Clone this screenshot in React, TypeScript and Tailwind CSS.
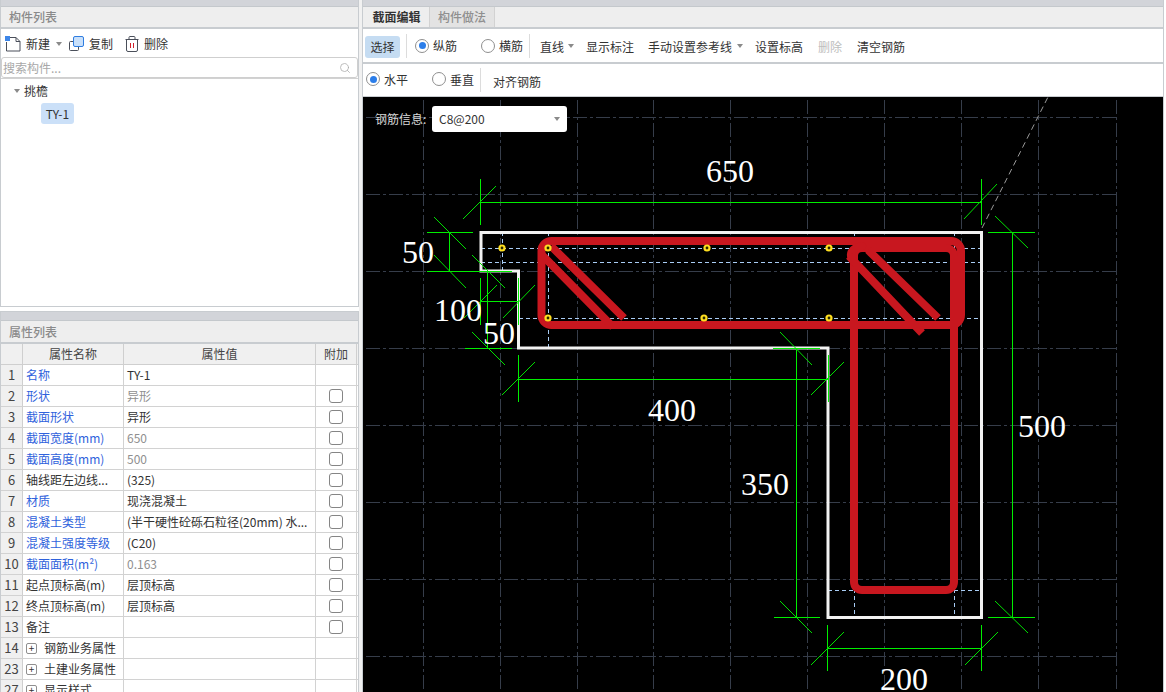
import { Search } from "lucide-react";

const BLUE = "text-[#2f62dc]";
const GRAY = "text-[#8f8f8f]";
const DARK = "text-[#333333]";

type Row = {
  no: number;
  name: string;
  value?: string;
  nameBlue?: boolean;
  valueGray?: boolean;
  check?: boolean;
  group?: boolean;
};

const rows: Row[] = [
  { no: 1, name: "名称", value: "TY-1", nameBlue: true },
  { no: 2, name: "形状", value: "异形", nameBlue: true, valueGray: true, check: true },
  { no: 3, name: "截面形状", value: "异形", nameBlue: true, check: true },
  { no: 4, name: "截面宽度(mm)", value: "650", nameBlue: true, valueGray: true, check: true },
  { no: 5, name: "截面高度(mm)", value: "500", nameBlue: true, valueGray: true, check: true },
  { no: 6, name: "轴线距左边线...", value: "(325)", check: true },
  { no: 7, name: "材质", value: "现浇混凝土", nameBlue: true, check: true },
  { no: 8, name: "混凝土类型", value: "(半干硬性砼砾石粒径(20mm) 水...", nameBlue: true, check: true },
  { no: 9, name: "混凝土强度等级", value: "(C20)", nameBlue: true, check: true },
  { no: 10, name: "截面面积(m²)", value: "0.163", nameBlue: true, valueGray: true, check: true },
  { no: 11, name: "起点顶标高(m)", value: "层顶标高", check: true },
  { no: 12, name: "终点顶标高(m)", value: "层顶标高", check: true },
  { no: 13, name: "备注", check: true },
  { no: 14, name: "钢筋业务属性", group: true },
  { no: 23, name: "土建业务属性", group: true },
  { no: 27, name: "显示样式", group: true },
];

const Caret = ({ className = "" }: { className?: string }) => (
  <span className={`inline-block w-0 h-0 border-x-[3px] border-x-transparent border-t-[4px] border-t-[#8a8a8a] ${className}`} />
);

const Radio = ({ on, label, className = "" }: { on?: boolean; label: string; className?: string }) => (
  <div className={`flex items-center ${className}`}>
    <span className="w-[14px] h-[14px] rounded-full border border-[#8f8f8f] flex items-center justify-center">
      {on && <span className="w-[7px] h-[7px] rounded-full bg-[#2b7de9]" />}
    </span>
    <span className={`ml-[4px] mt-[1px] ${DARK}`}>{label}</span>
  </div>
);

const NewIcon = () => (
  <svg width="16" height="16" viewBox="0 0 16 16" className="shrink-0">
    <path d="M5 1.5H11L15 5.5V15H1.5V6" fill="none" stroke="#4a4f5a" />
    <path d="M11 1.5V5.5H15" fill="none" stroke="#4a4f5a" />
    <rect x="0" y="0" width="5" height="5" fill="#3d86e8" />
  </svg>
);

const CopyIcon = () => (
  <svg width="15" height="16" viewBox="0 0 15 16" className="shrink-0">
    <rect x="0.5" y="5.5" width="9" height="9" rx="1" fill="none" stroke="#4a4f5a" />
    <rect x="4.5" y="0.5" width="10" height="10" rx="1.5" fill="#c9e0fa" stroke="#2f7de0" />
  </svg>
);

const TrashIcon = () => (
  <svg width="14" height="16" viewBox="0 0 14 16" className="shrink-0">
    <path d="M0.5 3.5H13.5M4 3.5V1.5Q4 0.5 5 0.5H9Q10 0.5 10 1.5V3.5" fill="none" stroke="#4a4f5a" />
    <path d="M1.5 3.5V14Q1.5 15.5 3 15.5H11Q12.5 15.5 12.5 14V3.5" fill="none" stroke="#4a4f5a" />
    <path d="M5.5 7V12M8.5 7V12" fill="none" stroke="#d0202a" />
  </svg>
);

const PropertyRow = ({ row }: { row: Row }) => (
  <div className="flex h-[21px] shrink-0 border-b border-[#d2d2d2] text-[12px]">
    <div className="w-[22px] bg-[#f0f0f0] border-r border-[#cfcfcf] flex items-center justify-center text-[13px] text-[#444444]">
      {row.no}
    </div>
    <div className={`w-[101px] border-r border-[#d2d2d2] flex items-center pl-[3px] whitespace-nowrap ${row.nameBlue ? BLUE : DARK}`}>
      {row.group ? (
        <>
          <span className="w-[11px] h-[11px] rounded-[2px] border border-[#8f8f8f] flex items-center justify-center text-[10px] leading-none mr-[7px]">
            +
          </span>
          {row.name}
        </>
      ) : (
        row.name
      )}
    </div>
    <div className={`w-[192px] border-r border-[#d2d2d2] flex items-center pl-[3px] whitespace-nowrap overflow-hidden ${row.valueGray ? GRAY : DARK}`}>
      {row.value}
    </div>
    <div className="w-[41px] border-r border-[#d2d2d2] flex items-center justify-center">
      {row.check && <span className="w-[14px] h-[14px] rounded-[3px] border border-[#858585] bg-white" />}
    </div>
  </div>
);

const Line = ({ d }: { d: string }) => <path d={d} fill="none" stroke="#00ee00" strokeWidth="1" shapeRendering="crispEdges" />;

// each diagonal tick is drawn apart because it is antialiased in the picture
const Slash = ({ x1, y1, x2, y2 }: { x1: number; y1: number; x2: number; y2: number }) => (
  <line x1={x1} y1={y1} x2={x2} y2={y2} stroke="#00e000" strokeWidth="1" />
);

const gridX = [423, 500, 577, 653, 730, 807, 884, 961, 1038, 1116];
const gridY = [117, 194, 271, 348, 425, 502, 579, 656];

const dims: [string, number, number][] = [
  ["650", 706, 182],
  ["50", 402, 263],
  ["100", 434, 321],
  ["50", 483, 344],
  ["400", 648, 421],
  ["350", 741, 495],
  ["500", 1018, 437],
  ["200", 880, 690],
];

const dots: [number, number][] = [
  [502, 248],
  [548, 248],
  [548, 318],
  [707, 248],
  [829, 248],
  [704, 318],
  [829, 318],
];

const Drawing = () => (
  <svg viewBox="363 97 800 595" className="absolute inset-0 w-[800px] h-[595px]">
    <g stroke="#363d4a" strokeWidth="1" strokeDasharray="14 3 3 3" shapeRendering="crispEdges">
      {gridX.map((x) => (
        <line key={x} x1={x} y1={100} x2={x} y2={692} />
      ))}
      {gridY.map((y) => (
        <line key={y} x1={366} y1={y} x2={1116} y2={y} />
      ))}
    </g>

    <path d="M982 228L1048 97" stroke="#9a9a9a" strokeWidth="1" strokeDasharray="6 4" fill="none" />

    <g stroke="#a9cdf5" strokeWidth="1" strokeDasharray="4 3" shapeRendering="crispEdges" fill="none">
      <path d="M481 248H982M481 262H982M519 318H982M828 590H982" />
      <path d="M502 232V271M548 232V348M854 232V617M954 232V617" />
    </g>

    <path d="M481 232.5H981.5V617.5H828V348H518.5V271H481Z" fill="none" stroke="#f2f2f2" strokeWidth="3" />

    <Line d="M480.5 202H981.5M480.5 179V225M981.5 179V225" />
    <Slash x1={463} y1={219} x2={496} y2={186} />
    <Slash x1={964} y1={219} x2={997} y2={184} />
    <Line d="M1012 232V617M988 232H1035M988 617H1035" />
    <Slash x1={995} y1={216} x2={1028} y2={248} />
    <Slash x1={995} y1={601} x2={1028} y2={633} />
    <Line d="M828 648H981.5M827.5 625V671M981.5 625V671" />
    <Slash x1={811} y1={665} x2={844} y2={632} />
    <Slash x1={965} y1={665} x2={998} y2={632} />
    <Line d="M449 232V271M427 232H473M427 271H512" />
    <Slash x1={434} y1={217} x2={466} y2={249} />
    <Slash x1={434} y1={255} x2={466} y2={288} />
    <Line d="M480 301H518M480.5 278V325M518.5 278V325" />
    <Slash x1={464} y1={318} x2={497} y2={285} />
    <Slash x1={503} y1={318} x2={535} y2={285} />
    <Line d="M487.5 271V348M465 348H512" />
    <Slash x1={472} y1={255} x2={505} y2={288} />
    <Slash x1={472} y1={332} x2={505} y2={365} />
    <Line d="M518 379H828M518.5 355V402M828 355V402" />
    <Slash x1={502} y1={395} x2={535} y2={362} />
    <Slash x1={811} y1={395} x2={844} y2={362} />
    <Line d="M796.5 348V617M773 348H820M774 617H820" />
    <Slash x1={780} y1={332} x2={812} y2={365} />
    <Slash x1={780} y1={601} x2={812} y2={633} />

    <g fill="none" stroke="#c8171f" strokeWidth="8">
      <rect x="541.5" y="241" width="419.5" height="84" rx="10" />
      <rect x="854" y="248" width="100" height="342" rx="8" />
      <path d="M551 246L624 318M542 255L613 327" />
      <path d="M854 262Q845 250 862 246" strokeLinecap="round" />
      <path d="M868 250L938 318M849 256L922 333" />
    </g>

    {dots.map(([x, y]) => (
      <circle key={`${x}-${y}`} cx={x} cy={y} r="2.5" fill="#2a2a00" stroke="#ffdf20" strokeWidth="2.2" />
    ))}

    <g className="font-['Liberation_Serif',serif]" fill="#ffffff" fontSize="32">
      {dims.map(([t, x, y]) => (
        <text key={`${t}-${x}`} x={x} y={y}>
          {t}
        </text>
      ))}
    </g>
  </svg>
);

export default function App() {
  return (
    <div className="w-[1166px] h-[692px] overflow-hidden flex bg-white text-[12px] font-['Noto_Sans_CJK_SC','Noto_Sans',sans-serif]">
      {/* left column */}
      <div className="w-[362px] shrink-0 flex flex-col border-r-[3px] border-[#f1f1f1]">
        <div className="h-[307px] shrink-0 flex flex-col border-x border-b border-[#c8ccd0]">
          <div className="h-[7px] shrink-0 bg-[#d2d4d9] border-b border-[#c4c8cc]" />
          <div className="h-[22px] shrink-0 bg-[#eeeeee] border-b-2 border-[#c8ccd0] flex items-center pl-[8px] text-[#8a8a8a] font-medium">
            构件列表
          </div>
          <div className="h-[27px] shrink-0 flex items-center pl-[4px] pt-[2px] text-[#333333]">
            <NewIcon />
            <span className="ml-[5px]">新建</span>
            <Caret className="ml-[6px]" />
            <span className="ml-[7px]"><CopyIcon /></span>
            <span className="ml-[5px]">复制</span>
            <span className="ml-[12px]"><TrashIcon /></span>
            <span className="ml-[5px]">删除</span>
          </div>
          <div className="h-[21px] shrink-0 mt-[1px] rounded-[3px] border border-[#cfcfcf] flex items-center justify-between pl-[1px] pr-[6px] text-[#a8a8a8]">
            <span>搜索构件...</span>
            <Search size={12} strokeWidth={1.5} className="text-[#a8a8a8]" />
          </div>
          <div className="flex-1 border-t border-[#d2d2d2] pt-[1px] text-[#333333]">
            <div className="h-[21px] flex items-center pl-[13px]">
              <Caret className="mr-[4px]" />
              <span>挑檐</span>
            </div>
            <div className="mt-[2px] ml-[40px] w-[33px] h-[21px] rounded-[3px] bg-[#cbe0f8] flex items-center justify-center">
              TY-1
            </div>
          </div>
        </div>

        <div className="mt-[4px] flex-1 min-h-0 overflow-hidden flex flex-col border-x border-t border-[#c8ccd0]">
          <div className="h-[9px] shrink-0 bg-[#d2d4d9] border-b border-[#c4c8cc]" />
          <div className="h-[23px] shrink-0 bg-[#eeeeee] border-b-2 border-[#c8ccd0] flex items-center pl-[8px] text-[#8a8a8a] font-medium">
            属性列表
          </div>
          <div className="flex h-[21px] shrink-0 bg-[#f0f0f0] border-b border-[#cfcfcf] text-[#444444]">
            <div className="w-[22px] border-r border-[#cfcfcf]" />
            <div className="w-[101px] border-r border-[#cfcfcf] flex items-center justify-center">属性名称</div>
            <div className="w-[192px] border-r border-[#cfcfcf] flex items-center justify-center">属性值</div>
            <div className="w-[41px] border-r border-[#cfcfcf] flex items-center justify-center">附加</div>
          </div>
          {rows.map((row) => (
            <PropertyRow key={row.no} row={row} />
          ))}
        </div>
      </div>

      {/* right column */}
      <div className="w-[802px] shrink-0 flex flex-col border-x border-[#c8ccd0]">
        <div className="h-[7px] shrink-0 bg-[#d2d4d9] border-b border-[#c4c8cc]" />
        <div className="h-[22px] shrink-0 bg-[#eeeeee] border-b-2 border-[#c8ccd0] flex">
          <div className="w-[65px] ml-[1px] flex items-center justify-center font-bold text-[#333333]">截面编辑</div>
          <div className="w-[66px] bg-[#e3e3e3] border-x border-[#d2d2d2] flex items-center justify-center font-medium text-[#8f8f8f]">
            构件做法
          </div>
        </div>

        <div className="h-[35px] shrink-0 border-b-2 border-[#c8ccd0] flex items-center text-[#333333]">
          <div className="ml-[2px] mt-[3px] w-[35px] h-[22px] rounded-[3px] bg-[#c5dcf2] flex items-center justify-center text-[#333333]">选择</div>
          <span className="ml-[6px] w-px h-[24px] bg-[#dcdcdc]" />
          <Radio on label="纵筋" className="ml-[8px]" />
          <Radio label="横筋" className="ml-[24px]" />
          <span className="ml-[6px] w-px h-[24px] bg-[#dcdcdc]" />
          <span className="ml-[10px] mt-[2px]">直线</span>
          <Caret className="ml-[4px]" />
          <span className="ml-[12px] mt-[3px]">显示标注</span>
          <span className="ml-[14px] mt-[3px]">手动设置参考线</span>
          <Caret className="ml-[5px]" />
          <span className="ml-[12px] mt-[3px]">设置标高</span>
          <span className="ml-[15px] mt-[3px] text-[#bdbdbd]">删除</span>
          <span className="ml-[15px] mt-[3px]">清空钢筋</span>
        </div>

        <div className="h-[33px] shrink-0 border-b border-[#c8ccd0] flex items-center text-[#333333]">
          <Radio on label="水平" className="ml-[3px] mb-[2px]" />
          <Radio label="垂直" className="ml-[24px] mb-[2px]" />
          <span className="ml-[6px] w-px h-[24px] bg-[#dcdcdc]" />
          <span className="ml-[12px] mt-[3px]">对齐钢筋</span>
        </div>

        <div className="relative flex-1 min-h-0 bg-black overflow-hidden">
          <Drawing />
          <div className="absolute left-[12px] top-[9px] h-[26px] flex items-center text-[#d8d8d8]">钢筋信息:</div>
          <div className="absolute left-[69px] top-[9px] w-[135px] h-[26px] rounded-[3px] bg-white flex items-center justify-between pl-[7px] pr-[7px] text-[#333333]">
            <span>C8@200</span>
            <Caret />
          </div>
        </div>
      </div>
    </div>
  );
}
